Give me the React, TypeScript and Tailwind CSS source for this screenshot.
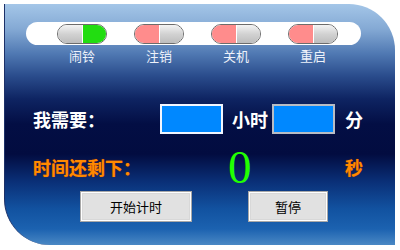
const cjk = '"Noto Sans CJK SC", "Microsoft YaHei", sans-serif';

type Toggle = { label: string; on: boolean };

const toggles: Toggle[] = [
  { label: '闹铃', on: true },
  { label: '注销', on: false },
  { label: '关机', on: false },
  { label: '重启', on: false },
];

function Pill({ on }: { on: boolean }) {
  return (
    <div className="flex h-[20px] w-[50px] overflow-hidden rounded-full border border-[#6c6c6c]">
      <div
        className={
          on
            ? 'h-full w-1/2 bg-gradient-to-b from-[#f4f4f4] via-[#d2d2d2] to-[#bdbdbd]'
            : 'h-full w-1/2 bg-[#ff8c8c]'
        }
      />
      <div className="h-full w-[1px] bg-white" />
      <div
        className={
          on
            ? 'h-full flex-1 bg-[#22dd11]'
            : 'h-full flex-1 bg-gradient-to-b from-[#f4f4f4] via-[#d2d2d2] to-[#bdbdbd]'
        }
      />
    </div>
  );
}

function Button({ label, width }: { label: string; width: string }) {
  return (
    <div className={`${width} h-[31px] border border-[#a8a8a8] bg-white p-[1px]`}>
      <div className="flex h-full w-full items-center justify-center border border-[#d8d8d8] bg-[#e1e1e1] text-[13px] text-black">
        {label}
      </div>
    </div>
  );
}

export default function App() {
  return (
    <div className="h-[250px] w-[400px] bg-white pl-[4px] pt-[4px]" style={{ fontFamily: cjk }}>
      <div className="h-[241px] w-[391px] overflow-hidden rounded-tr-[46px] rounded-bl-[46px] border-l border-[#1c3068] bg-[linear-gradient(180deg,#a4c6e8_0px,#84a9d4_25px,#4f78b2_50px,#2a4c8c_72px,#0e2462_95px,#030e44_120px,#020c40_150px,#0a3078_178px,#1252a0_205px,#1c62b0_225px,#4a88c4_241px)]">
        {/* toggle strip */}
        <div className="ml-[21px] mt-[18px] flex h-[23px] w-[335px] items-center rounded-full bg-white pl-[31px]">
          <div className="flex gap-[27px]">
            {toggles.map((t) => (
              <Pill key={t.label} on={t.on} />
            ))}
          </div>
        </div>
        <div className="ml-[52px] mt-[3px] flex gap-[27px]">
          {toggles.map((t) => (
            <div key={t.label} className="w-[50px] text-center text-[13px] leading-[16px] text-[#eef2fa]">
              {t.label}
            </div>
          ))}
        </div>

        {/* need time row */}
        <div className="mt-[40px] flex h-[30px] items-center">
          <div className="ml-[28px] w-[127px] text-[18px] font-bold text-white">我需要：</div>
          <div className="h-[30px] w-[63px] border-2 border-[#f2f6ff] bg-[#0088ff]" />
          <div className="ml-[9px] w-[40px] text-[18px] font-bold text-white">小时</div>
          <div className="h-[30px] w-[63px] border-2 border-[#b8bcc4] bg-[#0088ff]" />
          <div className="ml-[10px] text-[18px] font-bold text-white">分</div>
        </div>

        {/* remaining row */}
        <div className="mt-[14px] flex h-[38px] items-center">
          <div
            className="ml-[28px] w-[195px] text-[18px] font-bold text-[#ff8a00]"
            style={{ textShadow: '0 0 1px #b83a00' }}
          >
            时间还剩下：
          </div>
          <div
            className="w-[117px] text-[47px] leading-[38px] text-[#22ff00]"
            style={{ fontFamily: '"Liberation Serif", serif' }}
          >
            0
          </div>
          <div className="text-[18px] font-bold text-[#ff8a00]" style={{ textShadow: '0 0 1px #b83a00' }}>
            秒
          </div>
        </div>

        {/* buttons */}
        <div className="ml-[75px] mt-[5px] flex gap-[56px]">
          <Button label="开始计时" width="w-[112px]" />
          <Button label="暂停" width="w-[80px]" />
        </div>
      </div>
    </div>
  );
}
